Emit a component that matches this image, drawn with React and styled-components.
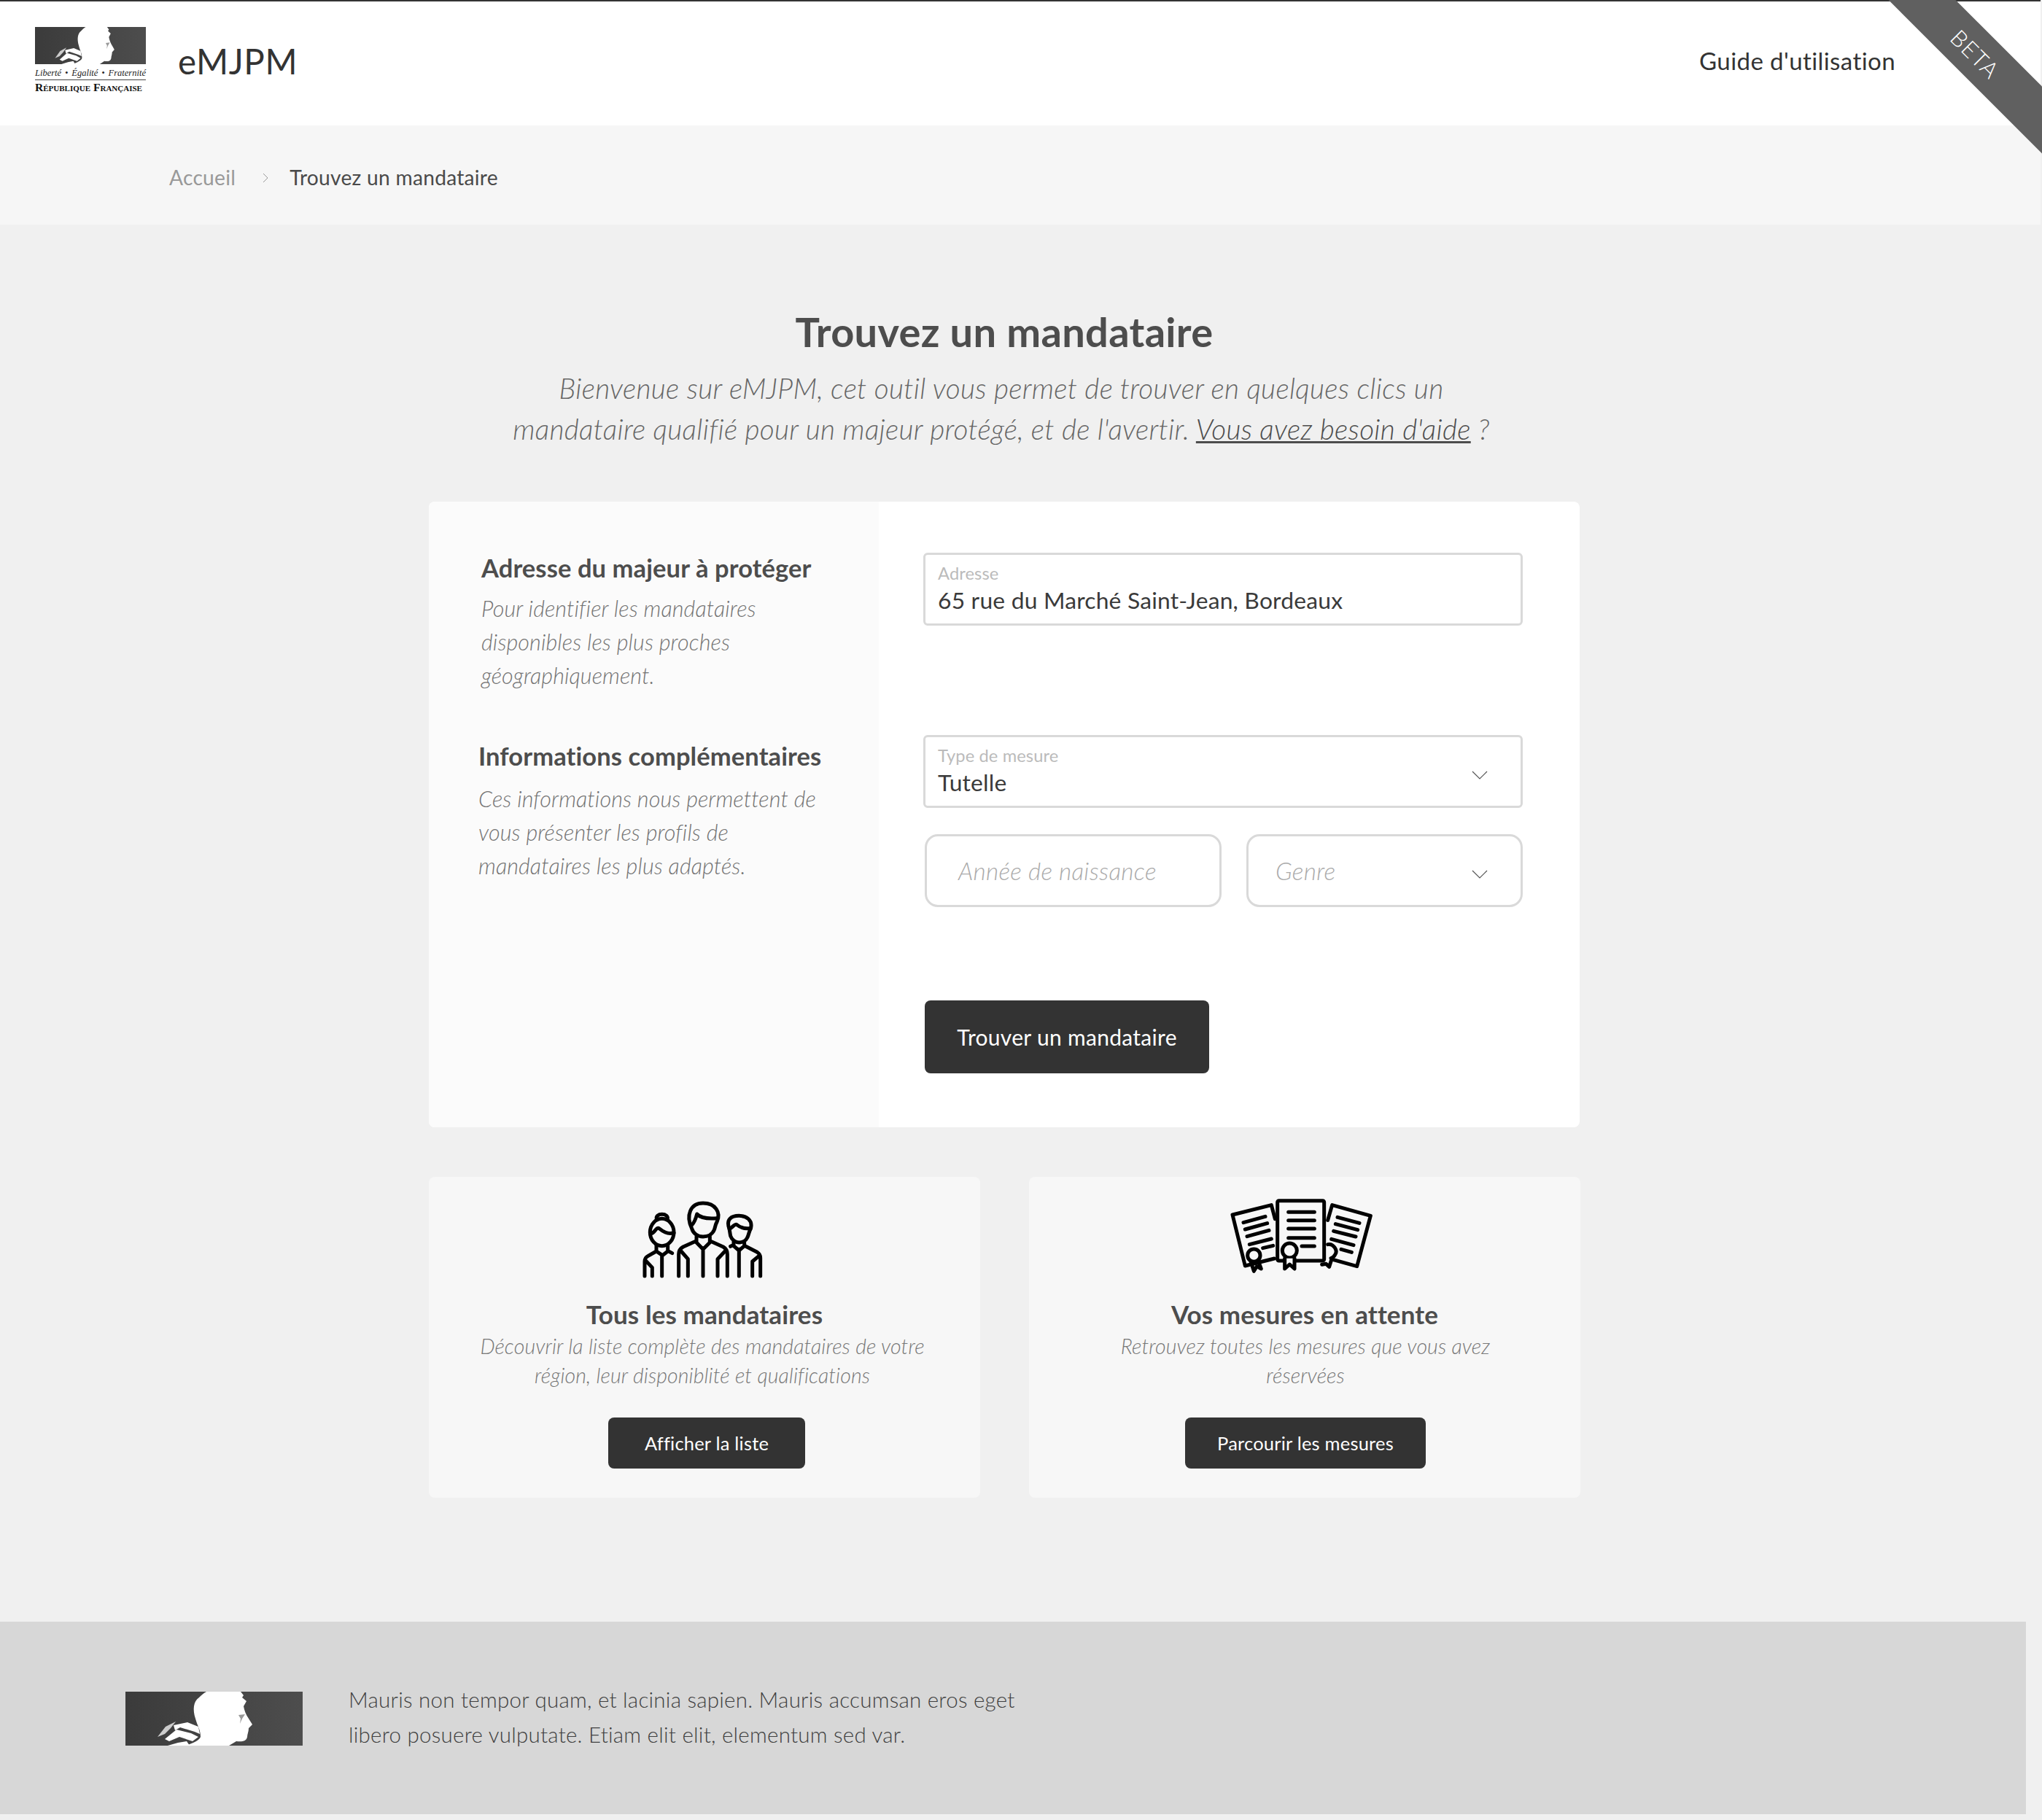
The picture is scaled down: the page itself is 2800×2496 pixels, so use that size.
import React from 'react';
import styled, { createGlobalStyle } from 'styled-components';

const Global = createGlobalStyle`
  html, body { margin: 0; padding: 0; background: #f0f0f0; }
  body { font-family: "Lato", "Open Sans", sans-serif; color: #333; }
  * { box-sizing: border-box; }
`;
const Page = styled.div`position: relative; width: 2800px; height: 2496px; overflow: hidden; background: #f0f0f0;`;
const Header = styled.header`
  height: 172px; background: #fff; border-top: 2px solid #333; width: 2798px;
  display: flex; align-items: center; padding: 0 199px 8px 48px;
`;
const Logo = styled.div`width: 152px; display: flex; flex-direction: column; margin-right: 44px; margin-top: -2px;`;
const Brand = styled.div`font-size: 47.5px; font-weight: 400; color: #333; flex: 1; letter-spacing: 0.6px;`;
const NavLink = styled.a`font-size: 33px; color: #333; letter-spacing: 0.42px;`;
const Ribbon = styled.div`
  position: absolute; top: 0; right: 0; width: 300px; height: 300px; overflow: hidden; pointer-events: none;
`;
const RibbonBand = styled.div`
  position: absolute; width: 500px; height: 65px; left: -41px; top: 41px; background: #606060; color: #fff;
  transform: rotate(45deg); display: flex; align-items: center; justify-content: center; font-size: 31px; font-weight: 300; letter-spacing: 1.5px;
`;
const Crumbs = styled.nav`
  height: 136px; background: #f6f6f6; width: 2798px; display: flex; align-items: center; padding: 6px 0 0 232px;
  font-size: 28.2px;
`;
const Crumb = styled.span`color: ${p => p.$active ? '#4a4a4a' : '#999'}; letter-spacing: 0.25px;`;
const Sep = styled.svg`width: 8px; height: 14px; margin: 2px 29px 0 37px; fill: none; stroke: #999; stroke-width: 1;`;
const Main = styled.main`display: flex; flex-direction: column; align-items: center; width: 2754px;`;
const Title = styled.h1`margin: 115px 0 0; font-size: 56px; line-height: 64px; font-weight: 700; color: #4d4d4d; text-align: center; letter-spacing: 0.3px;`;
const Lead = styled.p`
  margin: 17px 0 0 -8px; width: 1500px; font-size: 38.8px; line-height: 56px; font-style: italic; font-weight: 300; color: #666;
  text-align: center; letter-spacing: 0.3px;
`;
const Underlined = styled.a`text-decoration: underline; color: #4d4d4d;`;
const Card = styled.section`
  margin-top: 72px; width: 1578px; height: 858px; background: #fff; border-radius: 8px; overflow: hidden; display: flex;
`;
const Side = styled.aside`width: 617px; background: #fbfbfb; padding: 69px 0 0 68px; flex: none;`;
const SideBlock = styled.div`margin-left: ${p => p.$shift || 0}px; margin-top: ${p => p.$top || 0}px;`;
const SideTitle = styled.h2`margin: 0; font-size: 34.5px; line-height: 44px; font-weight: 700; color: #4d4d4d; white-space: nowrap; letter-spacing: 0.1px;`;
const SideText = styled.p`margin: ${p => p.$top}px 0 0; font-size: 30.5px; line-height: 46px; font-style: italic; font-weight: 300; color: #737373; white-space: nowrap; letter-spacing: 0.1px;`;
const FormCol = styled.div`flex: 1; padding: 70px 78px 0 61px; display: flex; flex-direction: column;`;
const Field = styled.div`
  position: relative; height: 100px; border: 3px solid #d9d9d9; border-radius: 6px; background: #fff; padding: 11px 0 0 17px;
  margin-top: ${p => p.$top || 0}px;
`;
const FieldLabel = styled.div`font-size: 23.7px; line-height: 28px; color: #bbb; letter-spacing: 0.1px;`;
const FieldValue = styled.div`font-size: 31.8px; line-height: 44px; color: #3a3a3a; margin-top: 1px; letter-spacing: 0.2px;`;
const Chevron = styled.svg`
  position: absolute; right: 45px; top: 46px; width: 22px; height: 12px; fill: none; stroke: #555; stroke-width: 1.2;
`;
const Row = styled.div`display: flex; gap: 34px; margin-top: 36px; padding-left: 2px;`;
const Pill = styled.div`
  position: relative; height: 100px; border: 3px solid #d9d9d9; border-radius: 18px; background: #fff; display: flex; align-items: center;
  width: ${p => p.$w}px; padding-left: ${p => p.$pad}px; font-size: 33.3px; font-style: italic; font-weight: 300; color: #aaa; letter-spacing: 0.3px;
`;
const Primary = styled.button`
  margin-top: 128px; margin-left: 2px; width: 390px; height: 100px; background: #333; color: #fff; border: 0; border-radius: 8px;
  font: 400 30px "Lato", sans-serif; letter-spacing: 0.3px; align-self: flex-start;
`;
const Tiles = styled.div`display: flex; gap: 67px; margin-top: 68px; width: 1578px;`;
const Tile = styled.article`
  width: 756px; height: 440px; flex: none; background: #f7f7f7; border-radius: 8px; display: flex; flex-direction: column; align-items: center; padding-top: 16px;
`;
const TileIcon = styled.svg`
  width: 220px; height: 140px; flex: none; display: block; fill: none; stroke: #000; stroke-width: 15; stroke-linecap: round; stroke-linejoin: round;
  margin-left: ${p => p.$dx}px;
`;
const TileTitle = styled.h3`margin: 10px 0 0; font-size: 35px; line-height: 44px; font-weight: 700; color: #4d4d4d; letter-spacing: 0.1px;`;
const TileText = styled.p`margin: 3px 0 0 ${p => p.$dx}px; font-size: 28.5px; line-height: 39.5px; font-style: italic; font-weight: 300; color: #777; text-align: center; white-space: pre-line; letter-spacing: 0.1px;`;
const TileButton = styled.button`
  margin-top: 38px; margin-left: ${p => p.$dx}px; height: 70px; width: ${p => p.$w}px; background: #333; color: #fff; border: 0; border-radius: 8px;
  font: 400 25.5px "Lato", sans-serif; letter-spacing: 0.2px;
`;
const Footer = styled.footer`
  margin-top: 170px; height: 264px; width: 2778px; background: #d7d7d7; display: flex; align-items: flex-start; padding: 96px 0 0 172px;
`;
const FooterLogo = styled.div`width: 243px; height: 74px; flex: none; margin-right: 63px;`;
const FooterText = styled.p`margin: -13px 0 0; font-size: 29.5px; line-height: 48px; font-weight: 300; color: #3f3f3f; white-space: pre-line; letter-spacing: 0.25px;`;
const LogoCaption = styled.div`
  font-family: "Liberation Serif", serif; font-style: italic; font-size: 12.5px; line-height: 14px; margin-top: 5px; color: #222; white-space: nowrap;
  padding-bottom: 2px; border-bottom: 1.5px solid #444; display: flex; justify-content: space-between;
`;
const LogoRepublic = styled.div`
  font-family: "Liberation Serif", serif; font-size: 15.6px; line-height: 14px; font-variant: small-caps; color: #111; white-space: nowrap; margin-top: 3px;
  font-weight: 600;
`;
const Seal = styled.svg`display: block; width: 100%; height: ${p => p.$h}px;`;

const Marianne = ({ h, id }) => (
  <Seal $h={h} viewBox="0 0 243 74" preserveAspectRatio="none">
    <defs>
      <linearGradient id={id} x1="0" x2="1" y1="0" y2="0">
        <stop offset="0" stopColor="#3b3b3b" />
        <stop offset="1" stopColor="#4d4d4d" />
      </linearGradient>
    </defs>
    <rect width="243" height="74" fill={`url(#${id})`} />
    <path d="M111 0 H158 L162 5 L160 8 L166 13 L162 20 C163 26 165 31 169 37 L174 45 L169 50 C169 55 167 58 167 62 C166 68 160 69 152 68 L142 74 H83 L93 70 C99 67 102 65 103 62 C103 52 99 48 96 37 C92 25 93 13 101 8 C104 5 107 2 111 0 Z" fill="#fff" />
    <path d="M155 32 L164 31 L160 37 L157 44 L158 37 Z" fill="#999" />
    <path d="M44 62 L55 48 L69 41 L62 50 L54 58 Z" fill="#ccc" />
    <path d="M66 46 L85 42 L100 48 L102 58 L95 55 L75 49 L68 53 Z" fill="#fff" />
    <path d="M54 65 L70 52 L90 57 L100 62 L92 68 L74 62 L60 68 Z" fill="#fff" />
    <path d="M58 74 L72 70 L84 68 L88 74 Z" fill="#fff" />
  </Seal>
);

const People = () => (
  <TileIcon $dx={8} viewBox="0 0 660 420">
    <path d="M122 128 C110 98 176 98 165 128" />
    <ellipse cx="143" cy="180" rx="49" ry="56" />
    <path d="M96 185 C115 185 115 160 130 163 C145 175 165 190 192 182" />
    <path d="M120 232 V258 L145 275 L167 258 V232 M167 256 L185 266 M120 258 L85 278 Q72 285 72 300 V360 M75 295 L103 325 V360 M143 275 V360" />
    <path d="M266 165 C240 110 260 60 312 60 C365 60 385 100 370 135 C362 150 362 160 358 170 C350 190 330 198 312 198 C290 198 272 185 266 165 Z" />
    <path d="M266 150 C276 140 282 125 287 105 C300 120 330 125 370 122" />
    <path d="M285 198 V222 L312 250 L340 222 V198 M285 215 L230 240 Q212 250 212 270 V360 M340 215 L395 240 Q412 250 412 270 V360 M312 245 V360 M222 258 L250 290 V360 M405 255 L372 290 V360" />
    <path d="M420 165 C405 125 430 112 460 112 C490 112 518 130 508 165 C500 180 500 190 495 200 C488 216 472 222 460 222 C445 222 430 210 425 195 C422 180 422 175 420 165 Z" />
    <path d="M420 165 C430 165 440 145 450 148 C465 160 485 168 508 163" />
    <path d="M438 218 V236 L460 255 L482 236 V222 M438 232 L425 238 M482 235 L535 262 Q548 270 548 285 V360 M460 250 V360 M545 275 L515 300 V360" />
  </TileIcon>
);

const Certificates = () => (
  <TileIcon $dx={-18} viewBox="0 0 660 420">
    <path d="M235 125 L220 68 L60 108 L112 318 L232 288" />
    <path d="M105 140 L195 115 M112 168 L203 143 M120 197 L210 172 M130 230 L220 207 M185 245 L227 235" />
    <circle cx="148" cy="275" r="26" />
    <path d="M135 300 L148 340 L160 320 L178 330 L165 295" />
    <path d="M452 130 L470 68 L628 112 L572 320 L475 293" />
    <path d="M492 118 L582 142 M484 146 L575 170 M476 175 L567 198 M467 208 L558 233 M507 250 L550 262" />
    <path d="M452 230 C475 225 495 255 482 272 C478 280 472 285 465 287" />
    <path d="M428 313 L445 310 L458 322 L468 290" />
    <rect x="245" y="50" width="192" height="247" rx="6" />
    <path d="M290 97 H397 M290 131 H397 M290 165 H397 M290 203 H397 M345 237 H397" />
    <circle cx="295" cy="255" r="30" fill="#f7f7f7" />
    <path d="M275 287 V330 L295 312 L315 330 V287" fill="#f7f7f7" />
  </TileIcon>
);

export default function App() {
  return (
    <Page>
      <Global />
      <Header>
        <Logo>
          <Marianne h={51} id="seal-top" />
          <LogoCaption><span>Liberté</span><span>•</span><span>Égalité</span><span>•</span><span>Fraternité</span></LogoCaption>
          <LogoRepublic>République Française</LogoRepublic>
        </Logo>
        <Brand>eMJPM</Brand>
        <NavLink>Guide d'utilisation</NavLink>
      </Header>
      <Ribbon><RibbonBand>BETA</RibbonBand></Ribbon>
      <Crumbs>
        <Crumb>Accueil</Crumb>
        <Sep viewBox="0 0 8 14"><path d="M1 1 L7 7 L1 13" /></Sep>
        <Crumb $active>Trouvez un mandataire</Crumb>
      </Crumbs>
      <Main>
        <Title>Trouvez un mandataire</Title>
        <Lead>Bienvenue sur eMJPM, cet outil vous permet de trouver en quelques clics un<br />mandataire qualifié pour un majeur protégé, et de l'avertir. <Underlined>Vous avez besoin d'aide</Underlined> ?</Lead>
        <Card>
          <Side>
            <SideBlock $shift={4}>
              <SideTitle>Adresse du majeur à protéger</SideTitle>
              <SideText $top={10}>Pour identifier les mandataires<br />disponibles les plus proches<br />géographiquement.</SideText>
            </SideBlock>
            <SideBlock $top={66}>
              <SideTitle>Informations complémentaires</SideTitle>
              <SideText $top={13}>Ces informations nous permettent de<br />vous présenter les profils de<br />mandataires les plus adaptés.</SideText>
            </SideBlock>
          </Side>
          <FormCol>
            <Field>
              <FieldLabel>Adresse</FieldLabel>
              <FieldValue>65 rue du Marché Saint-Jean, Bordeaux</FieldValue>
            </Field>
            <Field $top={150}>
              <FieldLabel>Type de mesure</FieldLabel>
              <FieldValue>Tutelle</FieldValue>
              <Chevron viewBox="0 0 22 12"><path d="M1 1 L11 11 L21 1" /></Chevron>
            </Field>
            <Row>
              <Pill $w={407} $pad={43}>Année de naissance</Pill>
              <Pill $w={379} $pad={37}>
                Genre
                <Chevron viewBox="0 0 22 12"><path d="M1 1 L11 11 L21 1" /></Chevron>
              </Pill>
            </Row>
            <Primary>Trouver un mandataire</Primary>
          </FormCol>
        </Card>
        <Tiles>
          <Tile>
            <People />
            <TileTitle>Tous les mandataires</TileTitle>
            <TileText $dx={-6}>{"Découvrir la liste complète des mandataires de votre\nrégion, leur disponiblité et qualifications"}</TileText>
            <TileButton $w={270} $dx={6}>Afficher la liste</TileButton>
          </Tile>
          <Tile>
            <Certificates />
            <TileTitle>Vos mesures en attente</TileTitle>
            <TileText $dx={2}>{"Retrouvez toutes les mesures que vous avez\nréservées"}</TileText>
            <TileButton $w={330} $dx={2}>Parcourir les mesures</TileButton>
          </Tile>
        </Tiles>
      </Main>
      <Footer>
        <FooterLogo><Marianne h={74} id="seal-bottom" /></FooterLogo>
        <FooterText>{"Mauris non tempor quam, et lacinia sapien. Mauris accumsan eros eget\nlibero posuere vulputate. Etiam elit elit, elementum sed var."}</FooterText>
      </Footer>
    </Page>
  );
}
